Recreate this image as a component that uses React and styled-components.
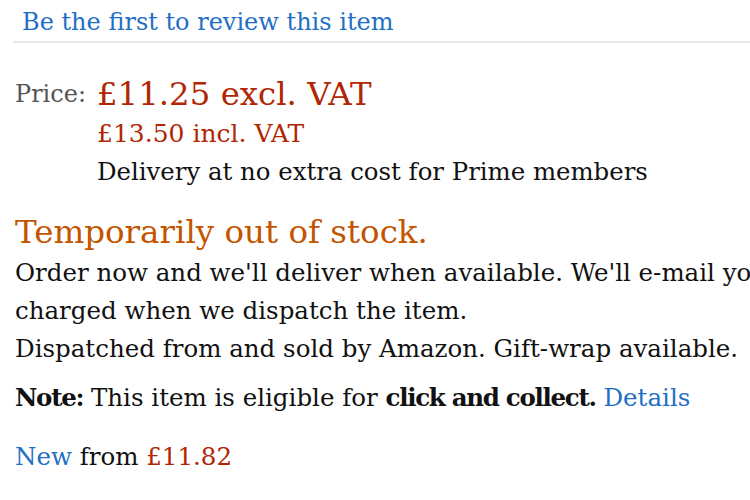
import React from "react";
import styled, { createGlobalStyle } from "styled-components";

const Global = createGlobalStyle`
  html, body { margin: 0; padding: 0; background: #fff; }
  body { font-family: "DejaVu Serif", "Liberation Serif", serif; color: #111; overflow: hidden; }
`;

const Page = styled.div`
  width: 750px;
  height: 500px;
  overflow: hidden;
  white-space: nowrap;
`;

const ReviewBar = styled.div`
  margin-left: 13px;
  padding: 8px 0 2px 9px;
  line-height: 28px;
  border-bottom: 2px solid #e7e7e7;
`;

const Link = styled.a`
  color: #1f6fc6;
  text-decoration: none;
  font-size: ${p => (p.$size ? `${p.$size}px` : "inherit")};
`;

const PriceGrid = styled.div`
  display: grid;
  grid-template-columns: 82px auto;
  margin: 30px 0 0 15px;
`;

const Label = styled.span`
  color: #555;
  font-size: 24px;
  padding-top: 7px;
`;

const PriceStack = styled.div`
  display: flex;
  flex-direction: column;
`;

const Price = styled.span`
  color: #b12704;
  font-size: ${p => p.$size}px;
  line-height: ${p => p.$lh}px;
`;

const Plain = styled.span`
  font-size: 24.4px;
  line-height: 38px;
`;

const Section = styled.div`
  margin: 0 0 0 15px;
`;

const Stock = styled.div`
  color: #c45500;
  font-size: 32.5px;
  line-height: 44px;
  margin-top: 19px;
`;

const Para = styled.div`
  font-size: 24.5px;
  line-height: 38px;
  margin-top: ${p => p.$mt || 0}px;
`;

const Strong = styled.b`
  letter-spacing: -1.3px;
`;

const Red = styled.span`
  color: #b12704;
`;

export default function App() {
  return (
    <Page>
      <Global />
      <ReviewBar>
        <Link href="#" $size={24}>Be the first to review this item</Link>
      </ReviewBar>
      <PriceGrid>
        <Label>Price:</Label>
        <PriceStack>
          <Price $size={32.4} $lh={42}>£11.25 excl. VAT</Price>
          <Price $size={25} $lh={38}>£13.50 incl. VAT</Price>
          <Plain>Delivery at no extra cost for Prime members</Plain>
        </PriceStack>
      </PriceGrid>
      <Section>
        <Stock>Temporarily out of stock.</Stock>
        <Para>Order now and we'll deliver when available. We'll e-mail you with an estimated delivery date as soon as we have more information. You won't be</Para>
        <Para>charged when we dispatch the item.</Para>
        <Para>Dispatched from and sold by Amazon. Gift-wrap available.</Para>
        <Para $mt={11}><Strong>Note:</Strong> This item is eligible for <Strong>click and collect.</Strong> <Link href="#">Details</Link></Para>
        <Para $mt={21}><Link href="#">New</Link> from <Red>£11.82</Red></Para>
      </Section>
    </Page>
  );
}
